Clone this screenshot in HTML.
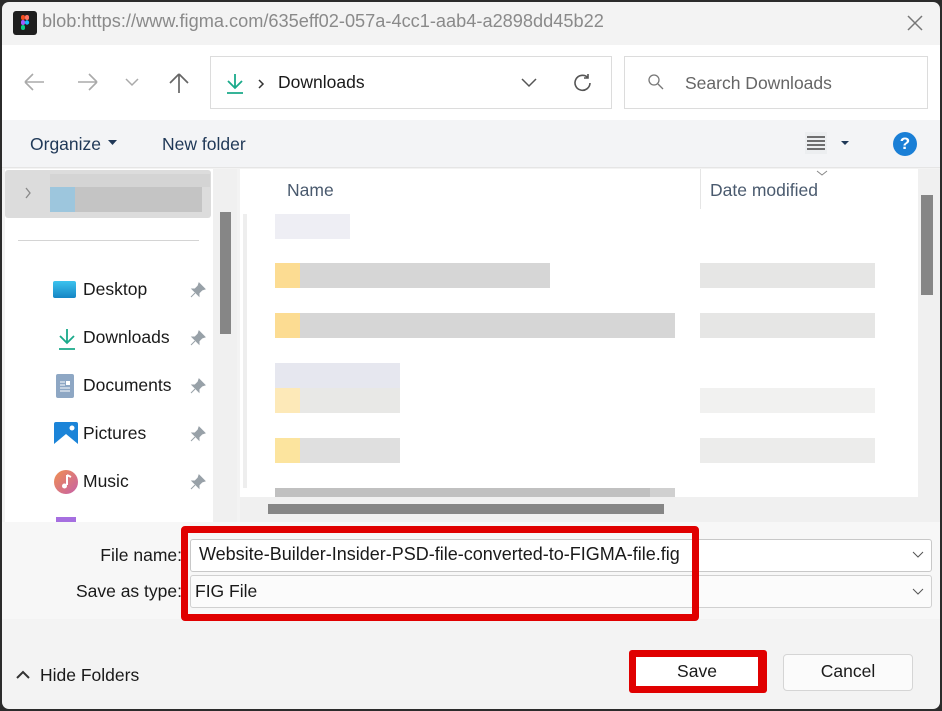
<!DOCTYPE html>
<html><head><meta charset="utf-8"><style>
*{margin:0;padding:0;box-sizing:border-box}
body{width:942px;height:711px;overflow:hidden;background:#2b2b2b;font-family:"Segoe UI","Liberation Sans",sans-serif;position:relative}
.a{position:absolute}
.t{font-size:17.5px;color:#1a1a1a;white-space:nowrap}
.win{left:2px;top:2px;width:938px;height:707px;background:#f3f3f3;border-radius:7px;overflow:hidden}
.b{position:absolute;height:25px}
</style></head><body>
<div class="a win">
<div class="a" style="left:11px;top:9px;width:24px;height:24px;background:#1e1e1e;border-radius:3px">
<svg width="24" height="24" viewBox="0 0 24 24"><rect x="8" y="4" width="4" height="5" rx="2" fill="#f24e1e"/><rect x="12" y="4" width="4" height="5" rx="2" fill="#ff7262"/><rect x="8" y="9" width="4" height="5" rx="2" fill="#a259ff"/><circle cx="14" cy="11.5" r="2.2" fill="#1abcfe"/><rect x="8" y="14" width="4" height="5" rx="2" fill="#0acf83"/></svg></div>
<div class="a t" style="left:40px;top:9px;color:#8a8a8a;font-size:18.2px">blob:https://www.figma.com/635eff02-057a-4cc1-aab4-a2898dd45b22</div>
<svg class="a" style="left:904px;top:12px" width="18" height="18"><path d="M2 2L16 16M16 2L2 16" stroke="#777" stroke-width="1.5"/></svg>
<div class="a" style="left:0;top:43px;width:938px;height:75px;background:#fff"></div>
<svg class="a" style="left:20px;top:70px" width="24" height="20"><path d="M3 10H22M3 10L11 2M3 10L11 18" stroke="#aaa" stroke-width="1.6" fill="none"/></svg>
<svg class="a" style="left:74px;top:70px" width="24" height="20"><path d="M2 10H21M21 10L13 2M21 10L13 18" stroke="#aaa" stroke-width="1.6" fill="none"/></svg>
<svg class="a" style="left:122px;top:74px" width="16" height="12"><path d="M2 3L8 9L14 3" stroke="#aaa" stroke-width="1.5" fill="none"/></svg>
<svg class="a" style="left:166px;top:69px" width="22" height="24"><path d="M11 3V22M11 3L2 12M11 3L20 12" stroke="#666" stroke-width="1.7" fill="none"/></svg>
<div class="a" style="left:208px;top:54px;width:402px;height:53px;border:1px solid #dcdcdc;background:#fff"></div>
<svg class="a" style="left:223px;top:70px" width="20" height="24"><path d="M10 2V16M3 9L10 16L17 9M2 21H18" stroke="#1aaa8a" stroke-width="1.8" fill="none"/></svg>
<svg class="a" style="left:255px;top:76px" width="8" height="12"><path d="M2 2L6 6L2 10" stroke="#333" stroke-width="1.5" fill="none"/></svg>
<div class="a t" style="left:276px;top:70px">Downloads</div>
<svg class="a" style="left:518px;top:75px" width="18" height="12"><path d="M2 2L9 9L16 2" stroke="#555" stroke-width="1.5" fill="none"/></svg>
<svg class="a" style="left:570px;top:70px" width="22" height="22"><path d="M18 11A7.5 7.5 0 1 1 15.5 5.2M16 2V6H12" stroke="#555" stroke-width="1.6" fill="none"/></svg>
<div class="a" style="left:622px;top:54px;width:304px;height:53px;border:1px solid #dcdcdc;background:#fff"></div>
<svg class="a" style="left:645px;top:71px" width="18" height="18"><circle cx="7" cy="7" r="5" stroke="#777" stroke-width="1.3" fill="none"/><path d="M11 11L16 16" stroke="#777" stroke-width="1.3"/></svg>
<div class="a t" style="left:683px;top:71px;color:#666">Search Downloads</div>
<div class="a" style="left:0;top:118px;width:938px;height:48px;background:#f3f4f6;border-bottom:1px solid #e5e5e5"></div>
<div class="a t" style="left:28px;top:132px;color:#1f3857">Organize</div>
<svg class="a" style="left:106px;top:138px" width="10" height="6"><path d="M0 0H9L4.5 5Z" fill="#1f3857"/></svg>
<div class="a t" style="left:160px;top:132px;color:#1f3857">New folder</div>
<div class="a" style="left:803px;top:130px;width:22px;height:22px;background:#eceef0"></div>
<svg class="a" style="left:805px;top:134px" width="18" height="14"><path d="M0 1H18M0 5H18M0 9H18M0 13H18" stroke="#222" stroke-width="1.2"/></svg>
<svg class="a" style="left:839px;top:139px" width="9" height="6"><path d="M0 0H8L4 4Z" fill="#1f3857"/></svg>
<div class="a" style="left:891px;top:130px;width:24px;height:24px;border-radius:50%;background:#1a7fd6;color:#fff;font:bold 17px 'Liberation Sans',sans-serif;text-align:center;line-height:24px">?</div>
<div class="a" style="left:3px;top:167px;width:232px;height:353px;background:#fff"></div>
<div class="a" style="left:3px;top:168px;width:206px;height:48px;background:#dcdcdc;border-radius:3px"></div>
<svg class="a" style="left:22px;top:185px" width="8" height="12"><path d="M2 1L6 6L2 11" stroke="#888" stroke-width="1.3" fill="none"/></svg>
<div class="a" style="left:48px;top:185px;width:25px;height:25px;background:#9dc6dd"></div>
<div class="a" style="left:73px;top:185px;width:127px;height:25px;background:#c4c4c4"></div>
<div class="a" style="left:48px;top:172px;width:160px;height:13px;background:#d4d4d4"></div>
<div class="a" style="left:16px;top:238px;width:181px;height:1px;background:#d4d4d4"></div>
<div class="a" style="left:211px;top:167px;width:24px;height:353px;background:#f0f0f0"></div>
<div class="a" style="left:218px;top:210px;width:11px;height:122px;background:#868686"></div>
<div class="a" style="left:51px;top:279px;width:23px;height:17px;background:linear-gradient(#3cc3ee,#1585c4);border-radius:2px"></div>
<div class="a t" style="left:81px;top:277px">Desktop</div>
<svg class="a" style="left:55px;top:325px" width="20" height="24"><path d="M10 2V16M3 9L10 16L17 9M2 22H18" stroke="#1aaa8a" stroke-width="1.8" fill="none"/></svg>
<div class="a t" style="left:81px;top:325px">Downloads</div>
<div class="a" style="left:54px;top:372px;width:18px;height:24px;background:#8ea7c4;border-radius:2px"></div>
<svg class="a" style="left:57px;top:378px" width="12" height="12"><path d="M1 2H6M1 5H6M1 8H11M1 11H11" stroke="#fff" stroke-width="1"/><rect x="7" y="1" width="4" height="4" fill="#fff"/></svg>
<div class="a t" style="left:81px;top:373px">Documents</div>
<svg class="a" style="left:52px;top:420px" width="24" height="24"><rect width="24" height="24" rx="2" fill="#1b84d8"/><path d="M0 22L12 12L24 22V24H0Z" fill="#fff"/><circle cx="18" cy="6" r="2.5" fill="#fff"/></svg>
<div class="a t" style="left:81px;top:421px">Pictures</div>
<svg class="a" style="left:52px;top:468px" width="24" height="24"><defs><linearGradient id="m" x1="0" y1="0" x2="1" y2="1"><stop offset="0" stop-color="#f09050"/><stop offset="1" stop-color="#c660a8"/></linearGradient></defs><circle cx="12" cy="12" r="12" fill="url(#m)"/><path d="M13 5V15M13 5L17 7" stroke="#fff" stroke-width="2" fill="none"/><circle cx="10.5" cy="16" r="2.5" fill="#fff"/></svg>
<div class="a t" style="left:81px;top:469px">Music</div>
<div class="a" style="left:54px;top:515px;width:20px;height:5px;background:#a66fe0"></div>
<svg class="a" style="left:188px;top:280px" width="16" height="16"><path d="M9 1L15 7L12 8L9 11L9 14L2 7L5 7L8 4Z M5 11L1 15" fill="#98a1a8" stroke="#98a1a8" stroke-width="1"/></svg>
<svg class="a" style="left:188px;top:328px" width="16" height="16"><path d="M9 1L15 7L12 8L9 11L9 14L2 7L5 7L8 4Z M5 11L1 15" fill="#98a1a8" stroke="#98a1a8" stroke-width="1"/></svg>
<svg class="a" style="left:188px;top:376px" width="16" height="16"><path d="M9 1L15 7L12 8L9 11L9 14L2 7L5 7L8 4Z M5 11L1 15" fill="#98a1a8" stroke="#98a1a8" stroke-width="1"/></svg>
<svg class="a" style="left:188px;top:424px" width="16" height="16"><path d="M9 1L15 7L12 8L9 11L9 14L2 7L5 7L8 4Z M5 11L1 15" fill="#98a1a8" stroke="#98a1a8" stroke-width="1"/></svg>
<svg class="a" style="left:188px;top:472px" width="16" height="16"><path d="M9 1L15 7L12 8L9 11L9 14L2 7L5 7L8 4Z M5 11L1 15" fill="#98a1a8" stroke="#98a1a8" stroke-width="1"/></svg>
<div class="a" style="left:238px;top:167px;width:678px;height:353px;background:#fff"></div>
<div class="a t" style="left:285px;top:178px;color:#4a5a6e">Name</div>
<div class="a" style="left:698px;top:167px;width:1px;height:40px;background:#e5e5e5"></div>
<svg class="a" style="left:814px;top:168px" width="12" height="7"><path d="M1 1L6 5L11 1" stroke="#888" fill="none"/></svg>
<div class="a t" style="left:708px;top:178px;color:#4a5a6e">Date modified</div>
<div class="a" style="left:916px;top:167px;width:22px;height:353px;background:#f0f0f0"></div>
<div class="a" style="left:919px;top:193px;width:12px;height:100px;background:#868686"></div>
<div class="a" style="left:241px;top:212px;width:4px;height:274px;background:#eeeeee"></div>
<div class="b" style="left:273px;top:212px;width:75px;background:#eeeef4"></div>
<div class="b" style="left:273px;top:261px;width:25px;background:#fcdc92"></div>
<div class="b" style="left:298px;top:261px;width:250px;background:#d6d6d6"></div>
<div class="b" style="left:273px;top:311px;width:25px;background:#fcdc92"></div>
<div class="b" style="left:298px;top:311px;width:375px;background:#d6d6d6"></div>
<div class="b" style="left:273px;top:361px;width:125px;background:#e6e7ef"></div>
<div class="b" style="left:273px;top:386px;width:25px;background:#fde9b8"></div>
<div class="b" style="left:298px;top:386px;width:100px;background:#e8e8e6"></div>
<div class="b" style="left:273px;top:436px;width:25px;background:#fce49e"></div>
<div class="b" style="left:298px;top:436px;width:100px;background:#dfdfdf"></div>
<div class="b" style="left:698px;top:261px;width:175px;background:#e6e6e5"></div>
<div class="b" style="left:698px;top:311px;width:175px;background:#e6e6e5"></div>
<div class="b" style="left:698px;top:386px;width:175px;background:#f1f1f0"></div>
<div class="b" style="left:698px;top:436px;width:175px;background:#ececeb"></div>
<div class="a" style="left:273px;top:486px;width:375px;height:10px;background:#c0c0c0"></div>
<div class="a" style="left:648px;top:486px;width:25px;height:10px;background:#d0d0d0"></div>
<div class="a" style="left:238px;top:495px;width:678px;height:25px;background:#f0f0f0"></div>
<div class="a" style="left:266px;top:502px;width:396px;height:10px;background:#868686"></div>
<div class="a" style="left:0;top:520px;width:938px;height:97px;background:#f7f7f7"></div>
<div class="a" style="left:188px;top:537px;width:742px;height:33px;background:#fff;border:1px solid #c8c8c8;border-radius:3px"></div>
<div class="a" style="left:188px;top:573px;width:742px;height:33px;background:#fbfbfb;border:1px solid #d0d0d0;border-radius:3px"></div>
<div class="a t" style="left:197px;top:542px;font-size:18px">Website-Builder-Insider-PSD-file-converted-to-FIGMA-file.fig</div>
<div class="a t" style="left:193px;top:579px">FIG File</div>
<svg class="a" style="left:910px;top:549px" width="12" height="8"><path d="M1 1L6 6L11 1" stroke="#555" fill="none"/></svg>
<svg class="a" style="left:910px;top:586px" width="12" height="8"><path d="M1 1L6 6L11 1" stroke="#555" fill="none"/></svg>
<div class="a" style="left:179px;top:524px;width:518px;height:95px;border:7px solid #e00000;border-radius:4px"></div>
<div class="a t" style="left:0;width:180px;text-align:right;top:543px">File name:</div>
<div class="a t" style="left:0;width:180px;text-align:right;top:579px">Save as type:</div>
<svg class="a" style="left:14px;top:668px" width="14" height="10"><path d="M1 8L7 2L13 8" stroke="#333" stroke-width="2" fill="none"/></svg>
<div class="a t" style="left:38px;top:663px">Hide Folders</div>
<div class="a" style="left:627px;top:648px;width:138px;height:43px;background:#e00000;border-radius:3px"></div>
<div class="a" style="left:634px;top:655px;width:122px;height:29px;background:#fff"></div>
<div class="a t" style="left:634px;top:659px;width:122px;text-align:center">Save</div>
<div class="a" style="left:781px;top:652px;width:130px;height:37px;background:#fbfbfb;border:1px solid #d5d5d5;border-radius:4px"></div>
<div class="a t" style="left:781px;top:659px;width:130px;text-align:center">Cancel</div>
</div>
</body></html>
